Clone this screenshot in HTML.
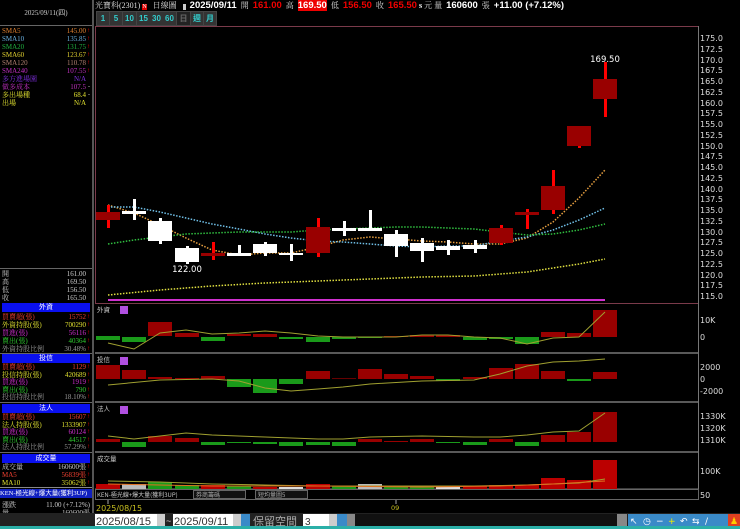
<!DOCTYPE html>
<html><head><meta charset="utf-8"><style>
*{margin:0;padding:0;box-sizing:border-box}
body{width:740px;height:529px;background:#000;overflow:hidden;position:relative;font-family:"Liberation Sans","Noto Sans CJK TC",sans-serif;font-size:8px;color:#ddd}
.a{position:absolute;white-space:nowrap}
.r{position:absolute;left:2px;width:88px;height:8px;font-size:7px;line-height:8px;font-family:"Liberation Serif","Noto Serif CJK SC",serif}
.r b{position:absolute;right:4px;font-weight:normal}
.r i{position:absolute;right:0;color:#f00;font-style:normal;font-size:6px}
.hd{position:absolute;left:2px;width:88px;height:9px;background:#0a10f0;color:#fff;text-align:center;font-size:7px;line-height:9px}
.btn{position:absolute;top:12px;height:13px;background:#333;color:#3cc;font-size:8px;line-height:13px;text-align:center;font-weight:bold}
.n{font-family:"Liberation Sans",sans-serif;font-size:9.5px;font-weight:bold;margin:0 2px}
</style></head><body>
<div class="a" style="left:0;top:0;width:92px;height:26px;border-bottom:1px solid #666;color:#ccc;font-size:7px;text-align:center;line-height:26px;font-family:'Liberation Serif',serif">2025/09/11(四)</div>
<div class="a" style="left:92px;top:0;width:2px;height:529px;background:#555"></div>
<div class="r" style="top:27px;color:#e08030">SMA5<b>145.00</b><i>↑</i></div>
<div class="r" style="top:35px;color:#6ab0e0">SMA10<b>135.85</b><i>↑</i></div>
<div class="r" style="top:43px;color:#20b040">SMA20<b>131.75</b><i>↑</i></div>
<div class="r" style="top:51px;color:#e0d030">SMA60<b>123.67</b><i>↑</i></div>
<div class="r" style="top:59px;color:#b08070">SMA120<b>110.78</b><i>↑</i></div>
<div class="r" style="top:67px;color:#c030c0">SMA240<b>107.55</b><i>↑</i></div>
<div class="r" style="top:75px;color:#8030e0">多方進場園<b>N/A</b></div>
<div class="r" style="top:83px;color:#c030c0">做多成本<b>107.5</b><i style="color:#ddd">-</i></div>
<div class="r" style="top:91px;color:#e0e030">多出場種<b>68.4</b><i style="color:#ddd">-</i></div>
<div class="r" style="top:99px;color:#e0e030">出場<b>N/A</b></div>
<div class="a" style="left:0;top:268px;width:92px;height:1px;background:#666"></div>
<div class="r" style="top:270px;color:#ccc">開<b>161.00</b></div>
<div class="r" style="top:278px;color:#ccc">高<b>169.50</b></div>
<div class="r" style="top:286px;color:#ccc">低<b>156.50</b></div>
<div class="r" style="top:294px;color:#ccc">收<b>165.50</b></div>
<div class="hd" style="top:303px">外資</div>
<div class="r" style="top:313px;color:#f04030">買賣超(張)<b>15752</b><i>↑</i></div>
<div class="r" style="top:321px;color:#e0e030">外資持股(張)<b>700290</b><i>↑</i></div>
<div class="r" style="top:329px;color:#d030d0">買進(張)<b>56116</b><i>↑</i></div>
<div class="r" style="top:337px;color:#30d030">賣出(張)<b>40364</b><i>↑</i></div>
<div class="r" style="top:345px;color:#999">外資持股比例<b>30.48%</b><i>↑</i></div>
<div class="a" style="left:0;top:353px;width:92px;height:1px;background:#666"></div>
<div class="hd" style="top:354px">投信</div>
<div class="r" style="top:363px;color:#f04030">買賣超(張)<b>1129</b><i>↑</i></div>
<div class="r" style="top:370.5px;color:#e0e030">投信持股(張)<b>420689</b><i>↑</i></div>
<div class="r" style="top:378px;color:#d030d0">買進(張)<b>1919</b><i>↑</i></div>
<div class="r" style="top:385.5px;color:#30d030">賣出(張)<b>790</b><i>↑</i></div>
<div class="r" style="top:393px;color:#999">投信持股比例<b>18.10%</b><i>↑</i></div>
<div class="a" style="left:0;top:402px;width:92px;height:1px;background:#666"></div>
<div class="hd" style="top:404px">法人</div>
<div class="r" style="top:413px;color:#f04030">買賣超(張)<b>15607</b><i>↑</i></div>
<div class="r" style="top:420.5px;color:#e0e030">法人持股(張)<b>1333907</b><i>↑</i></div>
<div class="r" style="top:428px;color:#d030d0">買進(張)<b>60124</b><i>↑</i></div>
<div class="r" style="top:435.5px;color:#30d030">賣出(張)<b>44517</b><i>↑</i></div>
<div class="r" style="top:443px;color:#999">法人持股比例<b>57.29%</b><i>↑</i></div>
<div class="a" style="left:0;top:452px;width:92px;height:1px;background:#666"></div>
<div class="hd" style="top:454px">成交量</div>
<div class="r" style="top:463px;color:#ccc">成交量<b>160600張</b><i>↑</i></div>
<div class="r" style="top:471px;color:#f04030">MA5<b>56839張</b><i>↑</i></div>
<div class="r" style="top:479px;color:#e0e030">MA10<b>35062張</b><i>↑</i></div>
<div class="a" style="left:0;top:487px;width:92px;height:1px;background:#888"></div>
<div class="a" style="left:0;top:489px;width:92px;height:9px;background:#1020c0;color:#fff;font-size:6.5px;line-height:9px;font-family:'Liberation Serif',serif">KEN-極光線+爆大量(獲利3UP)</div>
<div class="r" style="top:501px;color:#ccc">漲跌<b style="right:0">11.00 (+7.12%)</b></div>
<div class="r" style="top:509px;color:#ccc">量<b style="right:0">160600張</b></div>

<div class="a" style="left:95px;top:1px;font-size:8px;color:#ddd;line-height:10px;font-family:'Liberation Serif','Noto Serif CJK SC',serif">光寶科(2301)<span style="background:#d00;color:#fff;font-size:6px;margin-left:2px">N</span>&nbsp;&nbsp;&nbsp;日線圖&nbsp;&nbsp;&nbsp;<span style="background:#ccc;color:#000;font-size:6px">&nbsp;&nbsp;</span> <span class="n" style="color:#fff">2025/09/11</span> 開 <span class="n" style="color:#e00">161.00</span> 高 <span class="n" style="background:#e00;color:#fff">169.50</span> 低 <span class="n" style="color:#e00">156.50</span> 收 <span class="n" style="color:#e00">165.50</span><b style="color:#fff">s</b> 元 量 <span class="n" style="color:#fff">160600</span> 張 <span class="n" style="color:#fff">+11.00 (+7.12%)</span></div>
<div class="a" style="left:96px;top:11px;width:121px;height:15px;background:#444"></div>
<div class="btn" style="left:97px;width:12px">1</div>
<div class="btn" style="left:110px;width:12px">5</div>
<div class="btn" style="left:123px;width:13px">10</div>
<div class="btn" style="left:137px;width:13px">15</div>
<div class="btn" style="left:150px;width:13px">30</div>
<div class="btn" style="left:163px;width:13px">60</div>
<div class="btn" style="left:177px;width:13px;background:#222;color:#666">日</div>
<div class="btn" style="left:191px;width:12px">週</div>
<div class="btn" style="left:204px;width:12px">月</div>

<svg class="a" style="left:0;top:0" width="740" height="529">
<g fill="none">
<rect x="95.5" y="26.5" width="603" height="277" stroke="#7a3a4a"/>
<line x1="95" y1="353" x2="699" y2="353" stroke="#777" stroke-width="1.5"/>
<line x1="95" y1="402" x2="699" y2="402" stroke="#777" stroke-width="1.5"/>
<line x1="95" y1="452" x2="699" y2="452" stroke="#777" stroke-width="1.5"/>
<line x1="95" y1="489" x2="699" y2="489" stroke="#777"/>
<line x1="698.5" y1="26" x2="698.5" y2="500" stroke="#777"/>
<rect x="95.5" y="489.5" width="603" height="10" stroke="#666"/>
</g>
<line x1="108" y1="300" x2="605" y2="300" stroke="#d030d0" stroke-width="2"/>
<g fill="none" stroke-dasharray="1.5 1.5" stroke-width="1.5">
<polyline stroke="#e8a040" points="108,205 134,213 160,225 186,238 212,250 239,255 265,253 291,253 318,247 343,240 370,237 396,239 422,241 448,242 474,244 500,244 527,238 553,222 579,198 605,170"/>
<polyline stroke="#70c0e8" points="108,207 134,207 160,212 186,218 212,224 239,229 265,234 291,238 318,241 343,242 370,244 396,246 422,247 448,246 474,246 500,241 527,237 553,230 579,220 605,208"/>
<polyline stroke="#30c040" points="108,244 134,240 160,237 186,234 212,233 239,232 265,232 291,232 318,230 343,229 370,228 396,227 422,227 448,228 474,229 500,232 527,235 553,234 579,230 605,224"/>
<polyline stroke="#e0e040" points="108,295 160,290 212,286 265,283 318,281 370,279 422,277 474,276 527,272 579,264 605,259"/>
</g>
<g>
<rect x="107" y="205" width="3" height="23" fill="#f00"/><rect x="96" y="212" width="24" height="8" fill="#900"/>
<rect x="133" y="199" width="3" height="21" fill="#fff"/><rect x="122" y="211" width="24" height="3" fill="#fff"/>
<rect x="159" y="218" width="3" height="26" fill="#fff"/><rect x="148" y="221" width="24" height="20" fill="#fff"/>
<rect x="186" y="246" width="3" height="18" fill="#fff"/><rect x="175" y="248" width="24" height="14" fill="#fff"/>
<rect x="212" y="242" width="3" height="18" fill="#f00"/><rect x="201" y="253" width="24" height="3" fill="#900"/>
<rect x="238" y="245" width="3" height="11" fill="#fff"/><rect x="227" y="253" width="24" height="3" fill="#fff"/>
<rect x="264" y="242" width="3" height="14" fill="#fff"/><rect x="253" y="244" width="24" height="9" fill="#fff"/>
<rect x="290" y="244" width="3" height="17" fill="#fff"/><rect x="279" y="253" width="24" height="2" fill="#fff"/>
<rect x="317" y="218" width="3" height="39" fill="#f00"/><rect x="306" y="227" width="24" height="26" fill="#900"/>
<rect x="343" y="221" width="3" height="15" fill="#fff"/><rect x="332" y="228" width="24" height="3" fill="#fff"/>
<rect x="369" y="210" width="3" height="21" fill="#fff"/><rect x="358" y="228" width="24" height="3" fill="#fff"/>
<rect x="395" y="230" width="3" height="27" fill="#fff"/><rect x="384" y="234" width="24" height="12" fill="#fff"/>
<rect x="421" y="238" width="3" height="24" fill="#fff"/><rect x="410" y="243" width="24" height="8" fill="#fff"/>
<rect x="447" y="240" width="3" height="15" fill="#fff"/><rect x="436" y="246" width="24" height="4" fill="#fff"/>
<rect x="474" y="240" width="3" height="13" fill="#fff"/><rect x="463" y="245" width="24" height="4" fill="#fff"/>
<rect x="500" y="225" width="3" height="20" fill="#f00"/><rect x="489" y="228" width="24" height="15" fill="#900"/>
<rect x="526" y="209" width="3" height="20" fill="#f00"/><rect x="515" y="212" width="24" height="3" fill="#900"/>
<rect x="552" y="170" width="3" height="44" fill="#f00"/><rect x="541" y="186" width="24" height="24" fill="#900"/>
<rect x="578" y="126" width="3" height="22" fill="#f00"/><rect x="567" y="126" width="24" height="20" fill="#900"/>
<rect x="604" y="62" width="3" height="55" fill="#f00"/><rect x="593" y="79" width="24" height="20" fill="#900"/>
</g>
<text x="605" y="62" fill="#fff" font-size="8.5" font-family="DejaVu Sans" text-anchor="middle">169.50</text>
<text x="187" y="272" fill="#fff" font-size="8.5" font-family="DejaVu Sans" text-anchor="middle">122.00</text>
<g>
<rect x="96" y="336" width="24" height="4" fill="#1a9a1a"/><rect x="122" y="337" width="24" height="5" fill="#1a9a1a"/>
<rect x="148" y="322" width="24" height="14" fill="#900"/><rect x="175" y="333" width="24" height="4" fill="#900"/>
<rect x="201" y="337" width="24" height="4" fill="#1a9a1a"/><rect x="227" y="334" width="24" height="2" fill="#900"/>
<rect x="253" y="334" width="24" height="3" fill="#900"/><rect x="279" y="337" width="24" height="2" fill="#1a9a1a"/>
<rect x="306" y="337" width="24" height="5" fill="#1a9a1a"/><rect x="332" y="337" width="24" height="2" fill="#1a9a1a"/>
<rect x="358" y="337" width="24" height="1" fill="#1a9a1a"/><rect x="384" y="336" width="24" height="1" fill="#900"/>
<rect x="410" y="335" width="24" height="2" fill="#900"/><rect x="436" y="335" width="24" height="2" fill="#900"/>
<rect x="463" y="337" width="24" height="3" fill="#1a9a1a"/><rect x="489" y="337" width="24" height="2" fill="#1a9a1a"/>
<rect x="515" y="337" width="24" height="7" fill="#1a9a1a"/><rect x="541" y="332" width="24" height="5" fill="#900"/>
<rect x="567" y="333" width="24" height="4" fill="#900"/><rect x="593" y="310" width="24" height="27" fill="#900"/>
<polyline fill="none" stroke="#a0a030" points="108,343 134,349 160,333 186,330 212,334 239,333 265,331 291,333 318,336 343,337 370,337 396,337 422,335 448,335 474,337 500,338 527,344 553,338 579,337 605,312"/>
<rect x="120" y="306" width="8" height="8" fill="#b050e0"/>
<rect x="96" y="365" width="24" height="14" fill="#900"/><rect x="122" y="370" width="24" height="9" fill="#900"/>
<rect x="148" y="377" width="24" height="2" fill="#900"/><rect x="175" y="378" width="24" height="1" fill="#900"/>
<rect x="201" y="376" width="24" height="3" fill="#900"/><rect x="227" y="379" width="24" height="8" fill="#1a9a1a"/>
<rect x="253" y="379" width="24" height="14" fill="#1a9a1a"/><rect x="279" y="379" width="24" height="5" fill="#1a9a1a"/>
<rect x="306" y="371" width="24" height="8" fill="#900"/><rect x="332" y="378" width="24" height="1" fill="#600"/>
<rect x="358" y="369" width="24" height="10" fill="#900"/><rect x="384" y="374" width="24" height="5" fill="#900"/>
<rect x="410" y="376" width="24" height="3" fill="#900"/><rect x="436" y="379" width="24" height="2" fill="#1a9a1a"/>
<rect x="463" y="377" width="24" height="2" fill="#900"/><rect x="489" y="368" width="24" height="11" fill="#900"/>
<rect x="515" y="364" width="24" height="15" fill="#900"/><rect x="541" y="371" width="24" height="8" fill="#900"/>
<rect x="567" y="379" width="24" height="2" fill="#1a9a1a"/><rect x="593" y="372" width="24" height="7" fill="#900"/>
<polyline fill="none" stroke="#a0a030" points="108,385 160,380 212,379 239,381 265,388 291,391 318,389 343,387 370,384 422,381 474,380 500,374 527,366 553,362 579,361 605,359"/>
<rect x="120" y="357" width="8" height="8" fill="#b050e0"/>
<rect x="96" y="439" width="24" height="3" fill="#900"/><rect x="122" y="442" width="24" height="5" fill="#1a9a1a"/>
<rect x="148" y="436" width="24" height="6" fill="#900"/><rect x="175" y="438" width="24" height="4" fill="#900"/>
<rect x="201" y="442" width="24" height="3" fill="#1a9a1a"/><rect x="227" y="442" width="24" height="1" fill="#1a9a1a"/>
<rect x="253" y="442" width="24" height="2" fill="#1a9a1a"/><rect x="279" y="442" width="24" height="4" fill="#1a9a1a"/>
<rect x="306" y="442" width="24" height="3" fill="#1a9a1a"/><rect x="332" y="442" width="24" height="4" fill="#1a9a1a"/>
<rect x="358" y="439" width="24" height="3" fill="#900"/><rect x="384" y="441" width="24" height="1" fill="#900"/>
<rect x="410" y="439" width="24" height="3" fill="#900"/><rect x="436" y="442" width="24" height="1" fill="#1a9a1a"/>
<rect x="463" y="442" width="24" height="3" fill="#1a9a1a"/><rect x="489" y="439" width="24" height="3" fill="#900"/>
<rect x="515" y="442" width="24" height="4" fill="#1a9a1a"/><rect x="541" y="435" width="24" height="7" fill="#900"/>
<rect x="567" y="432" width="24" height="10" fill="#900"/><rect x="593" y="412" width="24" height="30" fill="#900"/>
<polyline fill="none" stroke="#a0a030" points="108,436 134,439 160,436 186,433 212,435 265,437 318,439 343,439 370,437 422,436 474,437 500,437 527,435 553,432 579,431 605,413"/>
<rect x="120" y="406" width="8" height="8" fill="#b050e0"/>
<rect x="96" y="484" width="24" height="5" fill="#b00"/><rect x="122" y="484" width="24" height="5" fill="#bbb"/>
<rect x="148" y="482" width="24" height="7" fill="#1a9a1a"/><rect x="175" y="485" width="24" height="4" fill="#1a9a1a"/>
<rect x="201" y="485" width="24" height="4" fill="#b00"/><rect x="227" y="486" width="24" height="3" fill="#1a9a1a"/>
<rect x="253" y="487" width="24" height="2" fill="#b00"/><rect x="279" y="487" width="24" height="2" fill="#ddd"/>
<rect x="306" y="484" width="24" height="5" fill="#b00"/><rect x="332" y="486" width="24" height="3" fill="#1a9a1a"/>
<rect x="358" y="484" width="24" height="5" fill="#bbb"/><rect x="384" y="486" width="24" height="3" fill="#1a9a1a"/>
<rect x="410" y="486" width="24" height="3" fill="#1a9a1a"/><rect x="436" y="487" width="24" height="2" fill="#ddd"/>
<rect x="463" y="486" width="24" height="3" fill="#b00"/><rect x="489" y="485" width="24" height="4" fill="#b00"/>
<rect x="515" y="485" width="24" height="4" fill="#b00"/><rect x="541" y="478" width="24" height="11" fill="#b00"/>
<rect x="567" y="480" width="24" height="9" fill="#b00"/><rect x="593" y="460" width="24" height="29" fill="#b00"/>
<polyline fill="none" stroke="#a0a030" points="108,481 160,482 212,484 265,485 318,486 370,486 422,486 474,486 527,485 579,483 605,479"/>
<polyline fill="none" stroke="#e07020" points="108,484 212,486 318,486 422,487 500,486 553,484 605,481"/>
</g>
<g font-size="6.5" fill="#ccc" font-family="Noto Sans CJK TC,sans-serif">
<text x="97" y="312">外資</text><text x="97" y="362">投信</text><text x="97" y="411">法人</text><text x="97" y="461">成交量</text>
<text x="97" y="497" font-size="6">KEN-極光線+爆大量(獲利3UP)</text>
</g>
<g fill="#111" stroke="#666"><rect x="193.5" y="490.5" width="52" height="8"/><rect x="255.5" y="490.5" width="52" height="8"/></g>
<g font-size="6" fill="#aaa" font-family="Noto Sans CJK TC,sans-serif"><text x="196" y="497">券商籌碼</text><text x="258" y="497">短均量圖5</text></g>
<g font-size="8" fill="#ddd" font-family="DejaVu Sans">
<text x="700" y="41">175.0</text><text x="700" y="52">172.5</text><text x="700" y="63">170.0</text><text x="700" y="73">167.5</text><text x="700" y="84">165.0</text><text x="700" y="95">162.5</text><text x="700" y="106">160.0</text><text x="700" y="116">157.5</text><text x="700" y="127">155.0</text><text x="700" y="138">152.5</text><text x="700" y="149">150.0</text><text x="700" y="159">147.5</text><text x="700" y="170">145.0</text><text x="700" y="181">142.5</text><text x="700" y="192">140.0</text><text x="700" y="202">137.5</text><text x="700" y="213">135.0</text><text x="700" y="224">132.5</text><text x="700" y="235">130.0</text><text x="700" y="245">127.5</text><text x="700" y="256">125.0</text><text x="700" y="267">122.5</text><text x="700" y="278">120.0</text><text x="700" y="288">117.5</text><text x="700" y="299">115.0</text>
<text x="700" y="323">10K</text><text x="700" y="340">0</text>
<text x="700" y="370">2000</text><text x="700" y="382">0</text><text x="700" y="394">-2000</text>
<text x="700" y="419">1330K</text><text x="700" y="431">1320K</text><text x="700" y="443">1310K</text>
<text x="700" y="474">100K</text><text x="700" y="498">50</text>
<text x="96" y="511" fill="#c8c020" font-size="8">2025/08/15</text>
<text x="391" y="510" fill="#c8c020" font-size="6.5">09</text>
</g>
<line x1="108" y1="500" x2="108" y2="504" stroke="#aaa"/>
<line x1="396" y1="500" x2="396" y2="504" stroke="#aaa"/>
<rect x="0" y="513" width="740" height="16" fill="#222"/>
<rect x="0" y="526" width="740" height="3" fill="#2bb0a8"/>
<rect x="95" y="514" width="62" height="12" fill="#fff"/><rect x="157" y="514" width="8" height="12" fill="#ccc"/>
<text x="96" y="525" font-size="11" fill="#333" font-family="Liberation Sans">2025/08/15</text>
<text x="166" y="524" font-size="9" fill="#ccc">~</text>
<rect x="173" y="514" width="62" height="12" fill="#fff"/><rect x="233" y="514" width="8" height="12" fill="#ccc"/><rect x="241" y="514" width="9" height="12" fill="#3a8ac8"/>
<text x="174" y="525" font-size="11" fill="#333" font-family="Liberation Sans">2025/09/11</text>
<text x="253" y="525" font-size="11" fill="#aaa" font-family="Noto Sans CJK TC,sans-serif">保留空間</text>
<rect x="303" y="514" width="26" height="12" fill="#fff"/><rect x="329" y="514" width="8" height="12" fill="#ccc"/><rect x="337" y="514" width="10" height="12" fill="#3a8ac8"/>
<text x="305" y="525" font-size="10" fill="#333">3</text>
<rect x="347" y="514" width="8" height="12" fill="#888"/><rect x="355" y="514" width="272" height="12" fill="#111"/><rect x="617" y="514" width="10" height="12" fill="#888"/>
<rect x="628" y="514" width="100" height="12" fill="#3a8ac8"/>
<g font-size="9" fill="#fff" font-family="DejaVu Sans"><text x="630" y="524">↖</text><text x="643" y="524">◷</text><text x="656" y="524">−</text><text x="668" y="524" fill="#ee0">+</text><text x="680" y="524">↶</text><text x="692" y="524">⇆</text><text x="705" y="524">/</text></g>
<rect x="728" y="514" width="12" height="12" fill="#e04020"/><text x="730" y="524" font-size="9" fill="#fc0">♟</text>
</svg>
</body></html>
